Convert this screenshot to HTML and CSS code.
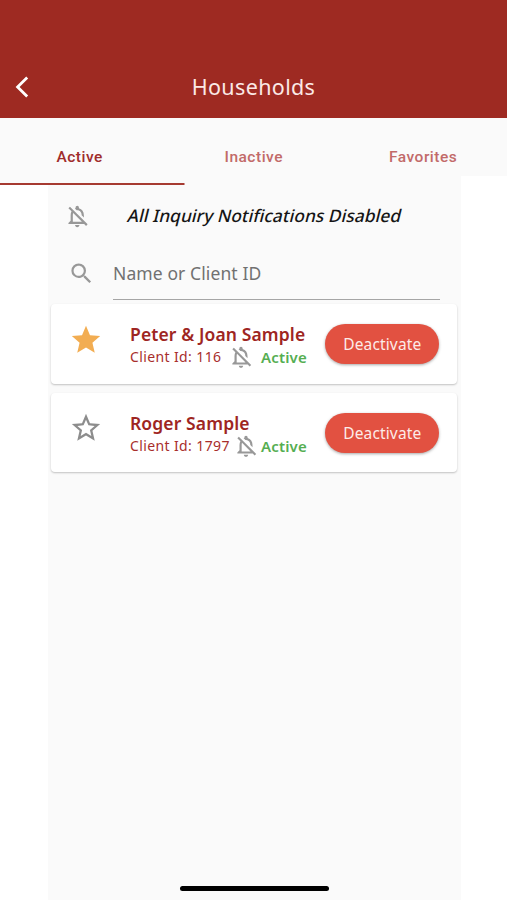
FILE: index.html
```html
<!DOCTYPE html>
<html lang="en">
<head>
<meta charset="utf-8">
<title>Households</title>
<link rel="stylesheet" href="styles.css">
</head>
<body>
<svg class="defs" aria-hidden="true">
  <symbol id="bell-off" viewBox="0 0 24 24"><path d="M12 22c1.1 0 2-.9 2-2h-4c0 1.1.9 2 2 2zm0-15.5c2.49 0 4 2.02 4 4.5v.1l2 2V11c0-3.07-1.63-5.64-4.5-6.32V4c0-.83-.67-1.5-1.5-1.5s-1.5.67-1.5 1.5v.68c-.24.06-.47.15-.69.23l1.64 1.64c.18-.02.36-.05.55-.05zM5.41 3.35L4 4.76l2.81 2.81C6.29 8.57 6 9.74 6 11v5l-2 2v1h14.24l1.74 1.74 1.41-1.41L5.41 3.35zM16 17H8v-6c0-.68.12-1.32.34-1.9L16 16.76V17z"/></symbol>
  <symbol id="star" viewBox="0 0 24 24"><path d="M12 17.27L18.18 21l-1.64-7.03L22 9.24l-7.19-.61L12 2 9.19 8.63 2 9.24l5.46 4.73L5.82 21z"/></symbol>
  <symbol id="star-outline" viewBox="0 0 24 24"><path d="M22 9.24l-7.19-.62L12 2 9.19 8.63 2 9.24l5.46 4.73L5.82 21 12 17.27 18.18 21l-1.63-7.03L22 9.24zM12 15.4l-3.76 2.27 1-4.28-3.32-2.88 4.38-.38L12 6.1l1.71 4.04 4.38.38-3.32 2.88 1 4.28L12 15.4z"/></symbol>
</svg>
<header class="topbar">
  <svg class="back" viewBox="0 0 14 22"><path d="M12.2 1.6 2.6 11l9.6 9.4"/></svg>
  <h1 class="title">Households</h1>
</header>
<nav class="tabs">
  <span class="tab tab-active">Active</span>
  <span class="tab tab-inactive">Inactive</span>
  <span class="tab tab-favorites">Favorites</span>
</nav>
<div class="indicator"></div>
<main class="content">
  <div class="notice">
    <svg class="icon bell"><use href="#bell-off"/></svg>
    <span class="notice-text">All Inquiry Notifications Disabled</span>
  </div>
  <div class="search">
    <svg class="icon magnifier" viewBox="0 0 24 24"><path d="M15.5 14h-.79l-.28-.27A6.47 6.47 0 0 0 16 9.5 6.5 6.5 0 1 0 9.5 16c1.61 0 3.09-.59 4.23-1.57l.27.28v.79l5 4.99L20.49 19l-4.99-5zm-6 0C7.01 14 5 11.99 5 9.5S7.01 5 9.5 5 14 7.01 14 9.5 11.99 14 9.5 14z"/></svg>
    <div class="field"><span class="placeholder">Name or Client ID</span></div>
  </div>
  <article class="card">
    <svg class="icon star starred"><use href="#star"/></svg>
    <div class="info">
      <h2 class="name name-peter">Peter &amp; Joan Sample</h2>
      <div class="meta">
        <span class="client">Client Id: 116</span>
        <svg class="icon bell-small"><use href="#bell-off"/></svg>
        <span class="status">Active</span>
      </div>
    </div>
    <button class="deactivate">Deactivate</button>
  </article>
  <article class="card">
    <svg class="icon star"><use href="#star-outline"/></svg>
    <div class="info">
      <h2 class="name name-roger">Roger Sample</h2>
      <div class="meta">
        <span class="client client-long">Client Id: 1797</span>
        <svg class="icon bell-small"><use href="#bell-off"/></svg>
        <span class="status">Active</span>
      </div>
    </div>
    <button class="deactivate">Deactivate</button>
  </article>
  <div class="home-bar"></div>
</main>
</body>
</html>
```
FILE: styles.css
```css
* { box-sizing: border-box; }
body {
  margin: 0;
  height: 900px;
  display: flex;
  flex-direction: column;
  overflow: hidden;
  background: #fff;
  font-family: "Noto Sans", "Open Sans", sans-serif;
}
h1, h2 { margin: 0; }
svg { display: block; flex: none; }
.defs { position: absolute; width: 0; height: 0; }
.icon { fill: #989898; }

.topbar {
  height: 118px;
  flex: none;
  display: grid;
  grid-template-columns: 60px 1fr 60px;
  align-items: center;
  padding-top: 55px;
  background: #9e2a22;
}
.back {
  width: 14px;
  height: 22px;
  margin-left: 15px;
  fill: none;
  stroke: #fff;
  stroke-width: 2.8;
}
.title {
  color: #fbe9e6;
  font-size: 21.5px;
  font-weight: 400;
  line-height: 30px;
  letter-spacing: 0.35px;
  text-align: center;
  white-space: nowrap;
}

.tabs {
  height: 58px;
  flex: none;
  display: flex;
  padding: 28px 0 0 56.5px;
  background: #fafafa;
  font-family: Roboto, sans-serif;
  font-size: 15.5px;
  font-weight: 500;
  line-height: 22px;
  letter-spacing: 0.5px;
  color: #c26a69;
}
.tab { white-space: nowrap; }
.tab-active { width: 168px; color: #a02c2b; }
.tab-inactive { width: 164.5px; }
.indicator {
  height: 9px;
  flex: none;
  background: linear-gradient(#a63a31, #a63a31) 0 100% / 184.5px 2.4px no-repeat,
    linear-gradient(#fafafa, #fafafa) 0 0 / 461px 100% no-repeat;
}

.content {
  width: 413px;
  flex: 1;
  margin-left: 48px;
  display: flex;
  flex-direction: column;
  padding: 0 4px 0 3px;
  background: #fafafa;
}
.notice {
  height: 61px;
  flex: none;
  display: flex;
  align-items: center;
  padding: 1px 0 0 13px;
}
.bell { width: 26.5px; height: 26.5px; }
.notice-text {
  margin-left: 37px;
  color: #151515;
  font-size: 17.3px;
  font-weight: 500;
  line-height: 24px;
  letter-spacing: 0.08px;
  white-space: nowrap;
  transform: skewX(-14deg);
}
.search {
  height: 58px;
  flex: none;
  display: flex;
  padding-left: 17px;
}
.magnifier { width: 27px; height: 27px; margin-top: 14px; }
.field {
  width: 326.5px;
  height: 54px;
  margin-left: 18px;
  padding-top: 15px;
  border-bottom: 1px solid #a5a5a5;
}
.placeholder {
  display: block;
  color: #717171;
  font-size: 17.5px;
  line-height: 24px;
  letter-spacing: 0.1px;
  white-space: nowrap;
}

.card {
  height: 79.5px;
  flex: none;
  display: flex;
  margin-bottom: 9px;
  padding-left: 18px;
  border-radius: 4px;
  background: #fff;
  box-shadow: 0 1px 2px rgba(0, 0, 0, .23);
}
.star { width: 34px; height: 34px; margin-top: 18.5px; fill: #8d8d8d; }
.starred { fill: #f2ad52; }
.info { width: 195.3px; margin-left: 27px; padding-top: 18px; }
.name {
  color: #9e2522;
  font-size: 17.5px;
  font-weight: 600;
  line-height: 24px;
  letter-spacing: 0.12px;
  white-space: nowrap;
}
.meta { height: 22px; display: flex; align-items: center; }
.client {
  width: 98px;
  color: #a82e2c;
  font-size: 14px;
  line-height: 22px;
  letter-spacing: 0.38px;
  white-space: nowrap;
}
.client-long { width: 103px; }
.bell-small { width: 26px; height: 26px; }
.status {
  width: 53.5px;
  margin-left: 7px;
  color: #55ae52;
  font-size: 15px;
  font-weight: 600;
  line-height: 22px;
  letter-spacing: 0.15px;
  white-space: nowrap;
}
.client-long ~ .status { margin-left: 2px; }
.deactivate {
  width: 114px;
  height: 40px;
  margin-top: 20px;
  padding: 0;
  border: 0;
  border-radius: 20px;
  background: #e25141;
  color: #fdebe8;
  font: 400 15.5px/40px "Noto Sans", sans-serif;
  letter-spacing: 0.15px;
  box-shadow: 0 1px 3px rgba(0, 0, 0, .35);
}
.home-bar {
  width: 149px;
  height: 5.5px;
  margin: auto 0 9px 129px;
  border-radius: 3px;
  background: #000;
}
```
